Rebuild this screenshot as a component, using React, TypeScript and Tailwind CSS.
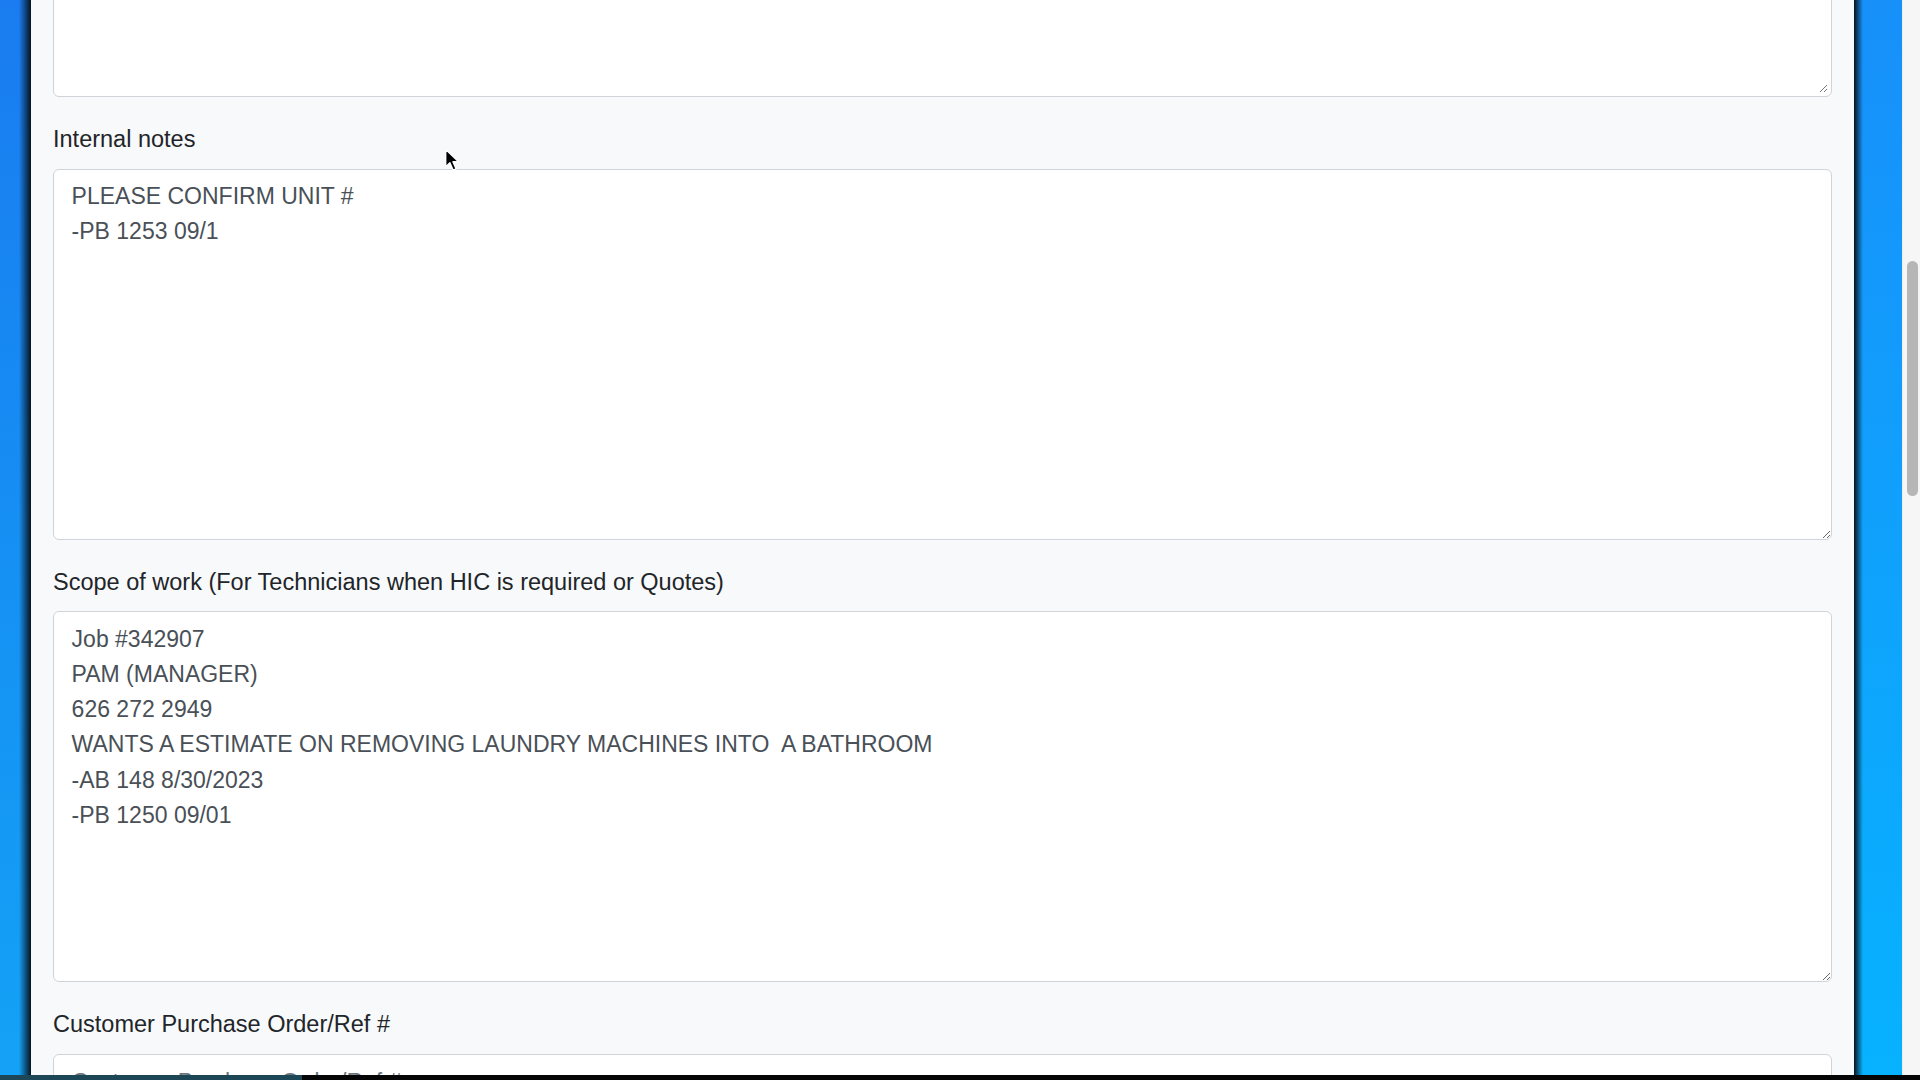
import React from "react";

const font = { fontFamily: '"Liberation Sans", Arial, sans-serif' };

const Field: React.FC<{ label: string; value: string; className?: string }> = ({ label, value, className = "" }) => (
  <div className={`mb-[24px] ${className}`}>
    <label className="block mb-[11.5px] text-[23.5px] leading-[36px] text-[#212529]">{label}</label>
    <textarea
      readOnly
      defaultValue={value}
      className="block w-full h-[371px] px-[17.6px] pt-[9.5px] pb-[8px] text-[23px] leading-[35.25px] text-[#495057] bg-white border border-[#ced4da] rounded-[6px] resize-y outline-none"
      style={font}
    />
  </div>
);

export default function App() {
  return (
    <div className="relative flex w-[1920px] h-[1080px] overflow-hidden bg-black" style={font}>
      {/* left desktop strip */}
      <div className="w-[31px] h-full bg-gradient-to-b from-[#1a7cf0] to-[#14a2f6] relative">
        <div className="absolute inset-y-0 right-0 w-[12px] bg-gradient-to-r from-transparent to-[#06131f]" />
      </div>

      {/* page */}
      <div className="w-[1823px] h-full bg-[#f8f9fa] px-[22px] overflow-hidden">
        <div className="h-[371px] mt-[-274px] mb-[24px] bg-white border border-[#ced4da] rounded-[6px] relative">
          <ResizeGrip />
        </div>

        <Field label="Internal notes" value={"PLEASE CONFIRM UNIT #\n-PB 1253 09/1"} />
        <Field
          label="Scope of work (For Technicians when HIC is required or Quotes)"
          value={
            "Job #342907\nPAM (MANAGER)\n626 272 2949\nWANTS A ESTIMATE ON REMOVING LAUNDRY MACHINES INTO  A BATHROOM\n-AB 148 8/30/2023\n-PB 1250 09/01"
          }
        />

        <div>
          <label className="block mb-[11.5px] text-[23.5px] leading-[36px] text-[#212529]">Customer Purchase Order/Ref #</label>
          <input
            readOnly
            placeholder="Customer Purchase Order/Ref #"
            className="block w-full h-[56px] px-[17.6px] pt-[9.5px] pb-[8px] text-[23px] leading-[35.25px] text-[#495057] placeholder:text-[#6c757d] bg-white border border-[#ced4da] rounded-[6px] outline-none"
            style={font}
          />
        </div>
      </div>

      {/* right desktop strip */}
      <div className="w-[48px] h-full bg-gradient-to-b from-[#1790fa] to-[#07b2ff] relative">
        <div className="absolute inset-y-0 left-0 w-[9px] bg-gradient-to-r from-[#07121b] to-transparent" />
      </div>

      {/* scrollbar */}
      <div className="w-[18px] h-full bg-[#f6f6f6] border-l border-[#ececec] relative">
        <div className="absolute left-[4px] top-[261px] w-[11px] h-[235px] rounded-full bg-[#b6b6b6]" />
      </div>

      {/* bottom dock edge */}
      <div className="absolute left-0 right-0 bottom-0 h-[5px] bg-[#050505]">
        <div className="w-[302px] h-full bg-[#1d4656]" />
      </div>

      {/* mouse cursor */}
      <svg className="absolute left-[444px] top-[148px]" width="17" height="25" viewBox="0 0 16 24">
        <path d="M1.5 1.5 L1.5 18 L5.5 14.2 L8.6 21.2 L11.4 20 L8.4 13.2 L13.8 13.2 Z" fill="#000" stroke="#fff" strokeWidth="1.3" strokeLinejoin="round" />
      </svg>
    </div>
  );
}

function ResizeGrip() {
  return (
    <svg className="absolute right-[3px] bottom-[3px]" width="10" height="10" viewBox="0 0 10 10">
      <path d="M9 2 L2 9 M9 6 L6 9" stroke="#777" strokeWidth="1" />
    </svg>
  );
}
